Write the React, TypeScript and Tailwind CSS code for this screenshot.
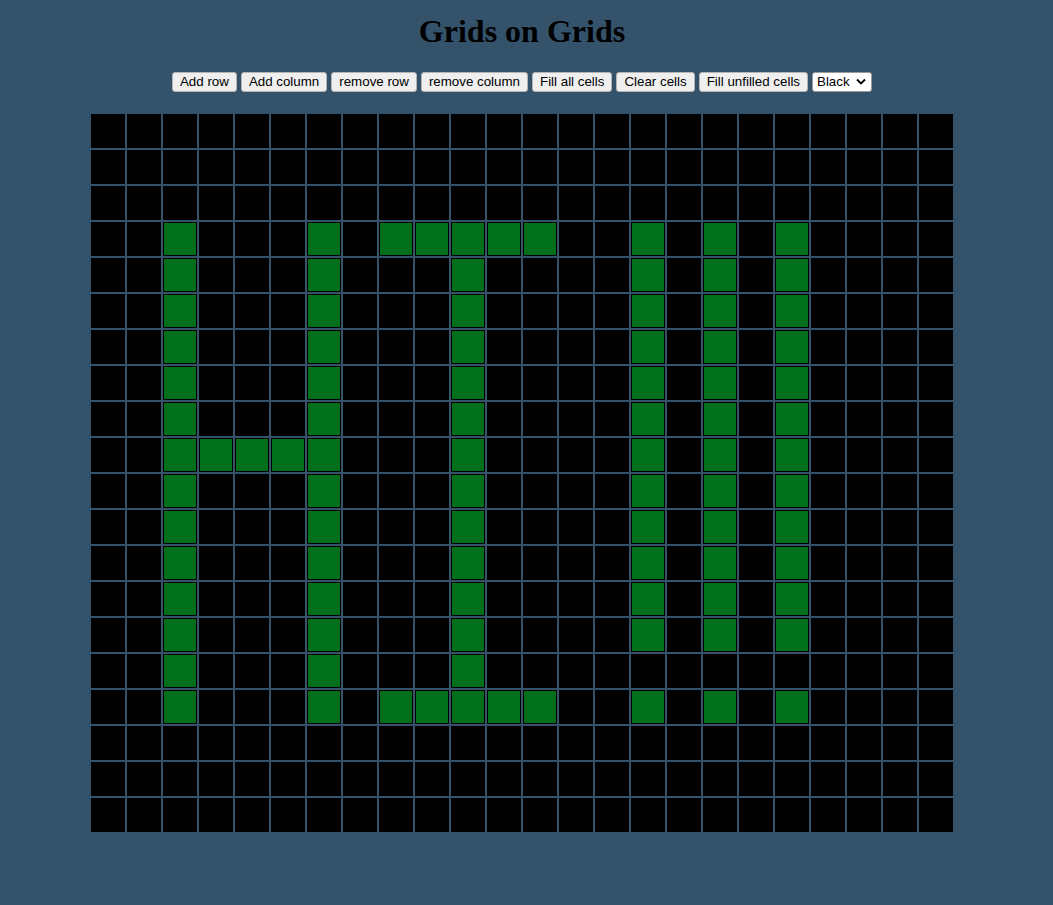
import React from "react";

const ROWS = 20;
const COLS = 24;

const greenSet = (() => {
  const s = new Set<string>();
  const add = (r: number, c: number) => s.add(`${r}-${c}`);
  // H
  for (let r = 3; r <= 16; r++) {
    add(r, 2);
    add(r, 6);
    add(r, 10);
  }
  add(9, 3);
  add(9, 4);
  add(9, 5);
  // I bars
  for (const c of [8, 9, 11, 12]) {
    add(3, c);
    add(16, c);
  }
  // three lines
  for (let r = 3; r <= 14; r++) {
    add(r, 15);
    add(r, 17);
    add(r, 19);
  }
  for (const c of [15, 17, 19]) add(16, c);
  return s;
})();

const buttons = [
  "Add row",
  "Add column",
  "remove row",
  "remove column",
  "Fill all cells",
  "Clear cells",
  "Fill unfilled cells",
];

export default function App() {
  return (
    <div className="min-h-[905px] w-full bg-[#34536b]">
      <div className="w-[1044px] flex flex-col items-center">
        <h1
          className="mt-[13px] h-[36px] text-[32px] font-bold leading-[36px] text-black"
          style={{ fontFamily: '"Liberation Serif", "Times New Roman", serif' }}
        >
          Grids on Grids
        </h1>
        <div
          className="mt-[22px] flex h-[21px] items-center gap-[4px] text-[13.33px] text-black"
          style={{ fontFamily: '"Liberation Sans", Arial, sans-serif' }}
        >
          {buttons.map((b) => (
            <button
              key={b}
              className="h-[20px] rounded-[3px] border border-[#b4b4b4] bg-[#efefef] px-[7px] leading-[16px] text-black"
            >
              {b}
            </button>
          ))}
          <div className="flex h-[20px] w-[60px] items-center justify-between rounded-[3px] border border-[#9a9a9a] bg-white pl-[4px] pr-[5px]">
            <span className="leading-[16px]">Black</span>
            <svg width="10" height="7" viewBox="0 0 10 7">
              <path d="M1 1.5 L5 5.5 L9 1.5" fill="none" stroke="#000" strokeWidth="1.8" />
            </svg>
          </div>
        </div>
        <div className="mt-[22px] grid grid-cols-[repeat(24,34px)] gap-[2px]">
          {Array.from({ length: ROWS * COLS }).map((_, i) => {
            const r = Math.floor(i / COLS);
            const c = i % COLS;
            const g = greenSet.has(`${r}-${c}`);
            return (
              <div
                key={i}
                className={
                  g
                    ? "h-[34px] w-[34px] border border-black bg-[#00701d]"
                    : "h-[34px] w-[34px] bg-black"
                }
              />
            );
          })}
        </div>
      </div>
    </div>
  );
}
